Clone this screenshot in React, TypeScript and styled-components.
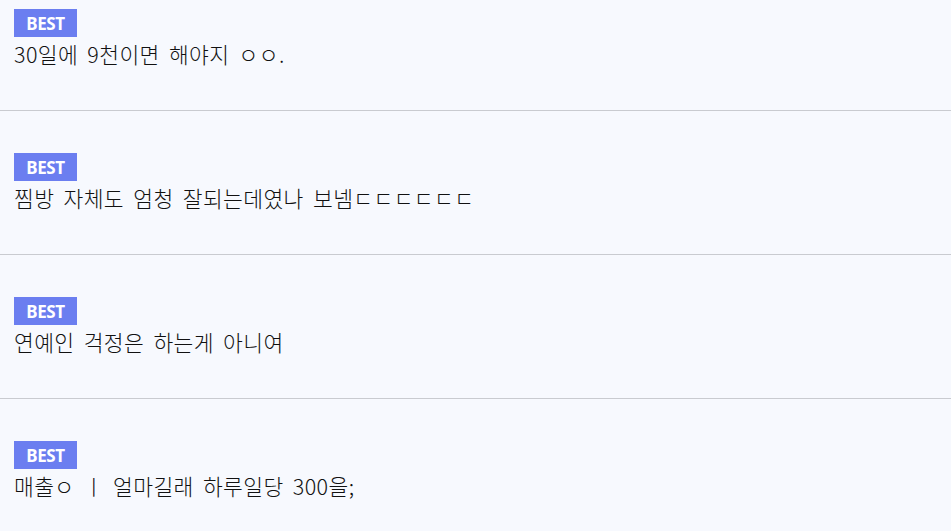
import styled, { createGlobalStyle } from "styled-components";

const GlobalStyle = createGlobalStyle`
  html, body {
    margin: 0;
    padding: 0;
    background-color: #f7f9fe;
    overflow: hidden;
  }
`;

const CommentList = styled.ul`
  list-style: none;
  margin: 0;
  padding: 0;
`;

const Comment = styled.li<{ $top: number; $height: number }>`
  box-sizing: border-box;
  height: ${(props) => props.$height}px;
  padding: ${(props) => props.$top}px 14px 0;
  border-bottom: 1px solid #c9cbd0;
`;

const Badge = styled.span`
  display: inline-flex;
  align-items: center;
  justify-content: center;
  width: 63px;
  height: 28px;
  background-color: #6b7ef0;
  color: #ffffff;
  font-family: "Noto Sans", "Open Sans", sans-serif;
  font-weight: 700;
  font-size: 17px;
  letter-spacing: -0.4px;
`;

const Body = styled.p`
  margin: 3px 0 0;
  color: #111111;
  font-family: "Noto Sans CJK KR", "Noto Sans", sans-serif;
  font-weight: 300;
  font-size: 21.5px;
  line-height: 28px;
  letter-spacing: 0.4px;
  word-spacing: 4px;
  white-space: pre;
`;

interface IComment {
  id: number;
  text: string;
}

const comments: IComment[] = [
  { id: 1, text: "30일에 9천이면 해야지 ㅇㅇ." },
  { id: 2, text: "찜방 자체도 엄청 잘되는데였나 보넴ㄷㄷㄷㄷㄷㄷ" },
  { id: 3, text: "연예인 걱정은 하는게 아니여" },
  { id: 4, text: "매출ㅇ ㅣ 얼마길래 하루일당 300을;" },
];

function App() {
  return (
    <>
      <GlobalStyle />
      <CommentList>
        {comments.map((comment, i) => (
          <Comment key={comment.id} $top={i === 0 ? 9 : 42} $height={i === 0 ? 111 : 144}>
            <Badge>BEST</Badge>
            <Body>{comment.text}</Body>
          </Comment>
        ))}
      </CommentList>
    </>
  );
}

export default App;
